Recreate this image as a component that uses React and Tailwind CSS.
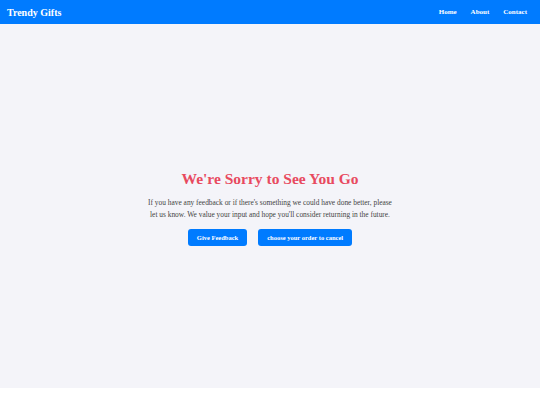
export default function App() {
  return (
    <div className="min-h-screen bg-white font-['Liberation_Serif','Times_New_Roman',serif]">
      <header className="h-6 bg-[#007bff] flex items-center justify-between px-[7px] text-white">
        <h1 className="text-[10px] font-bold">Trendy Gifts</h1>
        <nav className="flex gap-[14px] text-[7px] font-bold pr-[6px]">
          <a href="#">Home</a>
          <a href="#">About</a>
          <a href="#">Contact</a>
        </nav>
      </header>

      <main className="h-[364px] pt-[4px] bg-[#f4f4f9] flex flex-col items-center justify-center text-center">
        <h2 className="text-[15.5px] font-bold text-[#e84a5f] leading-[18px]">We're Sorry to See You Go</h2>
        <p className="mt-[9px] max-w-[252px] text-[7.4px] leading-[12px] text-[#444]">
          If you have any feedback or if there's something we could have done better, please let us know. We value your input and hope you'll consider returning in the future.
        </p>
        <div className="mt-[8px] flex gap-[11px]">
          <button className="h-[17px] px-[9px] rounded-[3px] bg-[#007bff] text-white text-[6.5px] font-bold">
            Give Feedback
          </button>
          <button className="h-[17px] px-[9px] rounded-[3px] bg-[#007bff] text-white text-[6.5px] font-bold">
            choose your order to cancel
          </button>
        </div>
      </main>
    </div>
  );
}
